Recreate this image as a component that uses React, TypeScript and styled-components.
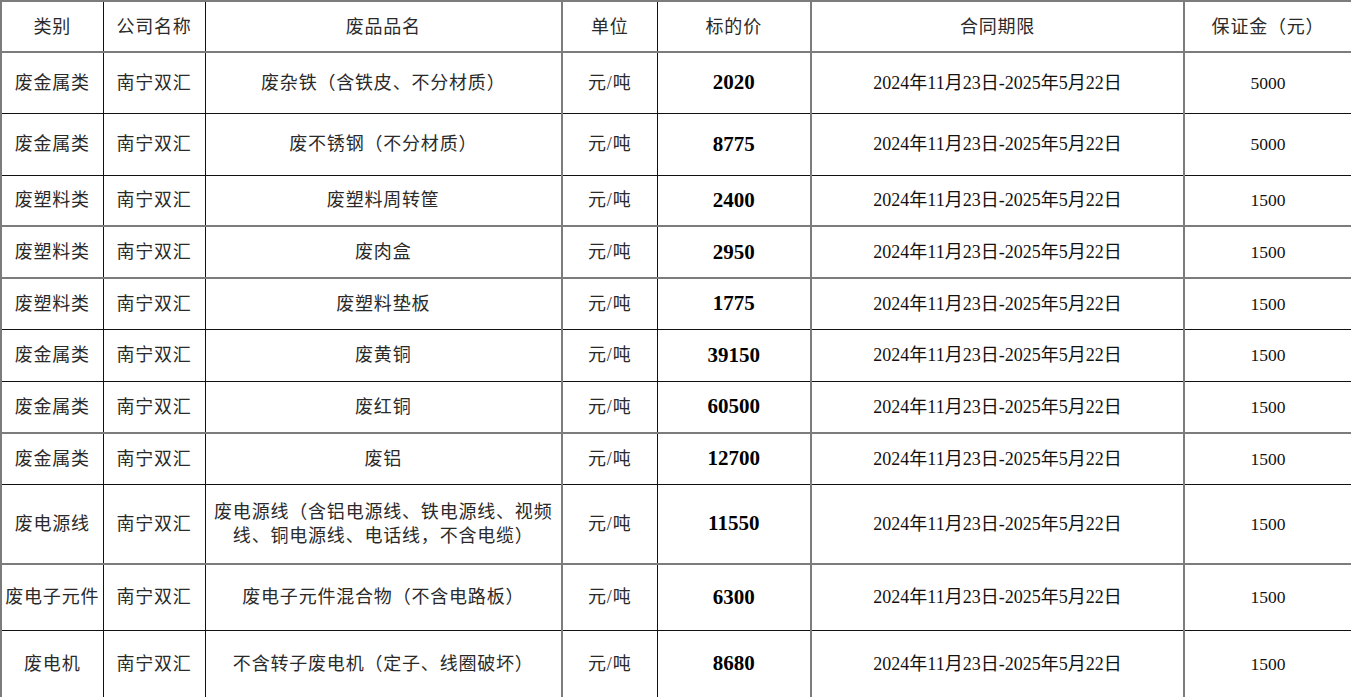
import styled, { createGlobalStyle } from 'styled-components'

type Item = {
  lei: string
  gongsi: string
  pinming: string
  danwei: string
  jia: string
  qixian: string
  baozheng: string
  h: number
  soft?: boolean
}

const QX = '2024年11月23日-2025年5月22日'

const items: Item[] = [
  { lei: '废金属类', gongsi: '南宁双汇', pinming: '废杂铁（含铁皮、不分材质）', danwei: '元/吨', jia: '2020', qixian: QX, baozheng: '5000', h: 61 },
  { lei: '废金属类', gongsi: '南宁双汇', pinming: '废不锈钢（不分材质）', danwei: '元/吨', jia: '8775', qixian: QX, baozheng: '5000', h: 62 },
  { lei: '废塑料类', gongsi: '南宁双汇', pinming: '废塑料周转筐', danwei: '元/吨', jia: '2400', qixian: QX, baozheng: '1500', h: 51 },
  { lei: '废塑料类', gongsi: '南宁双汇', pinming: '废肉盒', danwei: '元/吨', jia: '2950', qixian: QX, baozheng: '1500', h: 52, soft: true },
  { lei: '废塑料类', gongsi: '南宁双汇', pinming: '废塑料垫板', danwei: '元/吨', jia: '1775', qixian: QX, baozheng: '1500', h: 51, soft: true },
  { lei: '废金属类', gongsi: '南宁双汇', pinming: '废黄铜', danwei: '元/吨', jia: '39150', qixian: QX, baozheng: '1500', h: 52 },
  { lei: '废金属类', gongsi: '南宁双汇', pinming: '废红铜', danwei: '元/吨', jia: '60500', qixian: QX, baozheng: '1500', h: 52 },
  { lei: '废金属类', gongsi: '南宁双汇', pinming: '废铝', danwei: '元/吨', jia: '12700', qixian: QX, baozheng: '1500', h: 51, soft: true },
  { lei: '废电源线', gongsi: '南宁双汇', pinming: '废电源线（含铝电源线、铁电源线、视频线、铜电源线、电话线，不含电缆）', danwei: '元/吨', jia: '11550', qixian: QX, baozheng: '1500', h: 80 },
  { lei: '废电子元件', gongsi: '南宁双汇', pinming: '废电子元件混合物（不含电路板）', danwei: '元/吨', jia: '6300', qixian: QX, baozheng: '1500', h: 66, soft: true },
  { lei: '废电机', gongsi: '南宁双汇', pinming: '不含转子废电机（定子、线圈破坏）', danwei: '元/吨', jia: '8680', qixian: QX, baozheng: '1500', h: 68 },
]

const cols = [
  { w: 102, soft: true },
  { w: 102, soft: false },
  { w: 357, soft: false },
  { w: 95, soft: true },
  { w: 154, soft: false },
  { w: 373, soft: true },
  { w: 168, soft: true },
]

const Global = createGlobalStyle`
  html, body {
    margin: 0;
    padding: 0;
    background: #ffffff;
  }
`

const Sheet = styled.table`
  width: 1351px;
  border-collapse: collapse;
  table-layout: fixed;
  font-family: 'Liberation Serif', 'Noto Sans CJK SC', serif;
  font-size: 18px;
  color: #1c1c1c;
  border-right: 2px solid #7c7c7c;
  border-bottom: 2px solid #7c7c7c;
  border-top: 2px solid #7c7c7c;
`

const Row = styled.tr<{ $h: number; $soft?: boolean }>`
  height: ${(p) => p.$h}px;

  & > td,
  & > th {
    border-top: ${(p) => (p.$soft ? '2px solid #7c7c7c' : '1px solid #111')};
  }
`

const Cell = styled.td<{ $soft?: boolean; $wrap?: boolean }>`
  border: 1px solid #111;
  border-left: ${(p) => (p.$soft ? '2px solid #7c7c7c' : '1px solid #111')};
  text-align: center;
  vertical-align: middle;
  padding: ${(p) => (p.$wrap ? '0 4px' : '0')};
  line-height: 24px;
  white-space: ${(p) => (p.$wrap ? 'normal' : 'nowrap')};
  font-weight: 400;
  letter-spacing: 0.8px;
  color: #2a2a2a;
`

const HeadCell = styled(Cell).attrs({ as: 'th' })`
  font-weight: 400;
`

const Price = styled.span`
  font-weight: 700;
  font-size: 21px;
  letter-spacing: 0;
  color: #000;
`

const Small = styled.span<{ $size: number }>`
  font-size: ${(p) => p.$size}px;
  letter-spacing: 0;
  color: #111;
`

const headers = ['类别', '公司名称', '废品品名', '单位', '标的价', '合同期限', '保证金（元）']

export default function App() {
  return (
    <>
      <Global />
      <Sheet>
        <colgroup>
          {cols.map((c, i) => (
            <col key={i} style={{ width: c.w }} />
          ))}
        </colgroup>
        <thead>
          <Row $h={51}>
            {headers.map((t, i) => (
              <HeadCell key={t} $soft={cols[i].soft}>
                {t}
              </HeadCell>
            ))}
          </Row>
        </thead>
        <tbody>
          {items.map((it, idx) => (
            <Row key={idx} $h={it.h} $soft={idx === 0 || it.soft}>
              <Cell $soft={cols[0].soft}>{it.lei}</Cell>
              <Cell $soft={cols[1].soft}>{it.gongsi}</Cell>
              <Cell $soft={cols[2].soft} $wrap>
                {it.pinming}
              </Cell>
              <Cell $soft={cols[3].soft}>{it.danwei}</Cell>
              <Cell $soft={cols[4].soft}>
                <Price>{it.jia}</Price>
              </Cell>
              <Cell $soft={cols[5].soft}>
                <Small $size={18}>{it.qixian}</Small>
              </Cell>
              <Cell $soft={cols[6].soft}>
                <Small $size={17.5}>{it.baozheng}</Small>
              </Cell>
            </Row>
          ))}
        </tbody>
      </Sheet>
    </>
  )
}
